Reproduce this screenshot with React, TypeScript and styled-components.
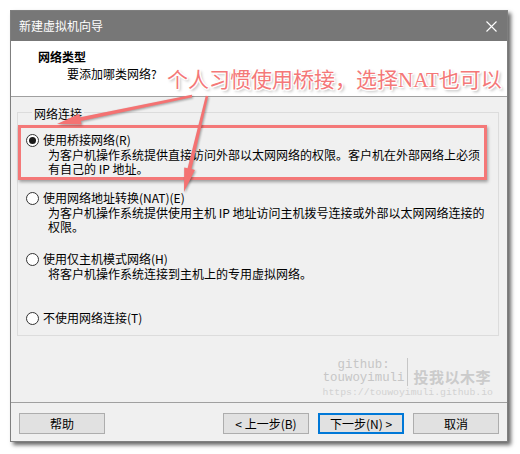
import React from "react";
import styled, { createGlobalStyle } from "styled-components";

const Global = createGlobalStyle`
  html, body { margin: 0; padding: 0; background: #ffffff; }
  body { font-family: "Noto Sans CJK SC", "Noto Sans", sans-serif; font-size: 12px; color: #000; }
`;

const Page = styled.div`
  padding: 10px;
  width: 520px;
  height: 454px;
  box-sizing: border-box;
`;

const Window = styled.div`
  position: relative;
  width: 498px;
  height: 432px;
  box-sizing: border-box;
  border: 1px solid #7f7f7f;
  background: #f0f0f0;
  box-shadow: 3px 3px 4px rgba(0, 0, 0, 0.6);
  display: flex;
  flex-direction: column;
`;

const TitleBar = styled.div`
  height: 30px;
  background: #777777;
  color: #ffffff;
  display: flex;
  align-items: center;
  justify-content: space-between;
  padding: 0 10px 0 8px;
  line-height: 14px;
`;

const TitleText = styled.span`
  font-size: 12px;
`;

const Header = styled.div`
  height: 56px;
  box-sizing: border-box;
  background: #ffffff;
  border-bottom: 1px solid #a0a0a0;
  padding: 9px 0 0 27px;
`;

const HeaderTitle = styled.div`
  font-weight: bold;
  line-height: 14px;
`;

const HeaderSub = styled.div`
  margin: 3px 0 0 29px;
  line-height: 14px;
`;

const Body = styled.div`
  position: relative;
  flex: 1;
  display: flex;
  flex-direction: column;
  padding: 6px 8px 0 6px;
`;

const Group = styled.fieldset`
  margin: 0;
  height: 233px;
  box-sizing: border-box;
  border: 1px solid #dcdcdc;
  padding: 0 0 0 8px;
`;

const Legend = styled.legend`
  padding: 4px 2px 0;
  margin-left: 6px;
  line-height: 14px;
`;

const Option = styled.div<{ $top: number }>`
  margin-top: ${(p) => p.$top}px;
`;

const OptionRow = styled.div`
  display: flex;
  align-items: center;
  gap: 4px;
  line-height: 14px;
  height: 14px;
`;

const Radio = styled.span<{ $checked?: boolean }>`
  width: 13px;
  height: 13px;
  box-sizing: border-box;
  border: 1px solid #333333;
  border-radius: 50%;
  background: #ffffff;
  display: flex;
  align-items: center;
  justify-content: center;
  &::after {
    content: "";
    width: 7px;
    height: 7px;
    border-radius: 50%;
    background: ${(p) => (p.$checked ? "#1a1a1a" : "transparent")};
  }
`;

const Desc = styled.div`
  margin: 1px 0 0 22px;
  line-height: 14px;
  white-space: pre;
`;

const Watermark = styled.div`
  margin-top: auto;
  align-self: flex-end;
  margin-right: 6px;
  padding-bottom: 3px;
  color: #c6c6c6;
  display: flex;
  flex-direction: column;
  align-items: flex-end;
`;

const WmTop = styled.div`
  display: flex;
  align-items: center;
  margin-right: 2px;
`;

const WmName = styled.div`
  font-family: "Liberation Mono", monospace;
  font-size: 12.4px;
  line-height: 13px;
  text-align: center;
  padding-right: 2px;
`;

const WmBar = styled.div`
  width: 1px;
  height: 28px;
  background: #c6c6c6;
  margin: 0 5px 0 1px;
  align-self: flex-end;
`;

const WmSign = styled.div`
  font-family: "Noto Sans CJK SC", serif;
  font-size: 15px;
  font-weight: bold;
  letter-spacing: 0.5px;
  line-height: 18px;
  align-self: flex-end;
  color: #cbcbcb;
`;

const WmUrl = styled.div`
  font-family: "Liberation Mono", monospace;
  font-size: 9.8px;
  line-height: 13px;
  color: #d2d2d2;
`;

const Footer = styled.div`
  height: 39px;
  box-sizing: border-box;
  border-top: 1px solid #a0a0a0;
  padding: 10px 8px 0 8px;
  display: flex;
  justify-content: space-between;
`;

const ButtonGroup = styled.div`
  display: flex;
  gap: 9px;
`;

const Button = styled.button<{ $primary?: boolean }>`
  width: 86px;
  height: 21px;
  box-sizing: border-box;
  background: #e1e1e1;
  border: ${(p) => (p.$primary ? "2px solid #0078d7" : "1px solid #adadad")};
  font-family: "Noto Sans CJK SC", sans-serif;
  font-size: 12px;
  line-height: 14px;
  color: #000;
  padding: 0;
  display: flex;
  align-items: center;
  justify-content: center;
`;

const RedBox = styled.div`
  position: absolute;
  left: 7px;
  top: 28px;
  width: 469px;
  height: 55px;
  box-sizing: border-box;
  border: 3px solid #f47878;
  box-shadow: 1px 2px 3px rgba(0, 0, 0, 0.35);
  pointer-events: none;
`;

const Annotation = styled.div`
  position: absolute;
  left: 156px;
  top: 55px;
  font-family: "Noto Sans CJK SC", sans-serif;
  font-size: 21px;
  line-height: 24px;
  color: #f47878;
  white-space: nowrap;
  text-shadow: 1px 0 0 #fff, -1px 0 0 #fff, 0 1px 0 #fff, 0 -1px 0 #fff,
    1px 1px 0 #fff, -1px -1px 0 #fff, 1px -1px 0 #fff, -1px 1px 0 #fff,
    2px 2px 3px rgba(0, 0, 0, 0.35);
`;

const Latin = styled.span`
  font-family: "Liberation Serif", serif;
`;

const Overlay = styled.svg`
  position: absolute;
  left: 0;
  top: 0;
  pointer-events: none;
  overflow: visible;
  filter: drop-shadow(1px 1px 1px rgba(0, 0, 0, 0.35));
`;

function arrowPoints(x1: number, y1: number, x2: number, y2: number) {
  const dx = x2 - x1;
  const dy = y2 - y1;
  const len = Math.hypot(dx, dy);
  const ux = dx / len;
  const uy = dy / len;
  const px = -uy;
  const py = ux;
  const headLen = 24;
  const headW = 5.5;
  const w0 = 1.2;
  const w1 = 2;
  const bx = x2 - ux * headLen;
  const by = y2 - uy * headLen;
  const pts = [
    [x1 + px * w0, y1 + py * w0],
    [bx + px * w1, by + py * w1],
    [bx + px * headW, by + py * headW],
    [x2, y2],
    [bx - px * headW, by - py * headW],
    [bx - px * w1, by - py * w1],
    [x1 - px * w0, y1 - py * w0],
  ];
  return pts.map((p) => `${p[0].toFixed(1)},${p[1].toFixed(1)}`).join(" ");
}

const options = [
  {
    top: 12,
    label: "使用桥接网络(R)",
    checked: true,
    desc: [
      "为客户机操作系统提供直接访问外部以太网网络的权限。客户机在外部网络上必须",
      "有自己的 IP 地址。",
    ],
  },
  {
    top: 15,
    label: "使用网络地址转换(NAT)(E)",
    desc: [
      "为客户机操作系统提供使用主机 IP 地址访问主机拨号连接或外部以太网网络连接的",
      "权限。",
    ],
  },
  {
    top: 18,
    label: "使用仅主机模式网络(H)",
    desc: ["将客户机操作系统连接到主机上的专用虚拟网络。"],
  },
  { top: 30, label: "不使用网络连接(T)", desc: [] as string[] },
];

export default function App() {
  return (
    <Page>
      <Global />
      <Window>
        <TitleBar>
          <TitleText>新建虚拟机向导</TitleText>
          <svg width="11" height="11" viewBox="0 0 11 11">
            <path d="M0.5 0.5 L10.5 10.5 M10.5 0.5 L0.5 10.5" stroke="#ffffff" strokeWidth="1.1" />
          </svg>
        </TitleBar>
        <Header>
          <HeaderTitle>网络类型</HeaderTitle>
          <HeaderSub>要添加哪类网络?</HeaderSub>
        </Header>
        <Body>
          <Group>
            <Legend>网络连接</Legend>
            {options.map((o) => (
              <Option key={o.label} $top={o.top}>
                <OptionRow>
                  <Radio $checked={o.checked} />
                  <span>{o.label}</span>
                </OptionRow>
                {o.desc.length > 0 && <Desc>{o.desc.join("\n")}</Desc>}
              </Option>
            ))}
          </Group>
          <Watermark>
            <WmTop>
              <WmName>
                github:
                <br />
                touwoyimuli
              </WmName>
              <WmBar />
              <WmSign>投我以木李</WmSign>
            </WmTop>
            <WmUrl>https://touwoyimuli.github.io</WmUrl>
          </Watermark>
          <RedBox />
        </Body>
        <Footer>
          <Button>帮助</Button>
          <ButtonGroup>
            <Button>&lt; 上一步(B)</Button>
            <Button $primary>下一步(N) &gt;</Button>
            <Button>取消</Button>
          </ButtonGroup>
        </Footer>
        <Annotation>
          个人习惯使用桥接，选择<Latin>NAT</Latin>也可以
        </Annotation>
        <Overlay width="496" height="430" viewBox="0 0 496 430">
          <polygon points={arrowPoints(181, 85, 46, 113)} fill="#f47272" />
          <polygon points={arrowPoints(196, 85, 173, 181)} fill="#f47272" />
        </Overlay>
      </Window>
    </Page>
  );
}
